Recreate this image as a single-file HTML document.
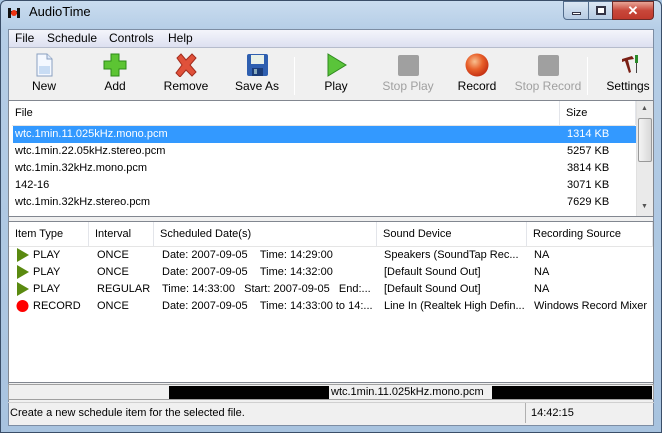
<!DOCTYPE html>
<html><head><meta charset="utf-8"><style>
*{margin:0;padding:0;box-sizing:border-box}
body{width:662px;height:433px;overflow:hidden;font-family:"Liberation Sans",sans-serif;font-size:11px;color:#000;position:relative;background:#a9c6e2}
.a{position:absolute;white-space:nowrap}
#frame{position:absolute;left:0;top:0;width:662px;height:433px;background:linear-gradient(180deg,#c9dcef 0,#b5cde6 30px,#a8c3df 100%);border:1px solid #3a4e68;border-radius:6px 6px 0 0}
#client{position:absolute;left:8px;top:29px;width:646px;height:397px;background:#f0f0f0;border:1px solid #7d8da3}
.menu{position:absolute;left:0;top:0;width:644px;height:18px;background:linear-gradient(#f4f5fb,#dde0f0);border-bottom:1px solid #b6bccc}
.tb{position:absolute;top:19px;left:0;width:644px;height:51px;background:#f0f0f0}
.btn{position:absolute;top:0;width:70px;text-align:center;font-size:12px}
.btn .ic{position:absolute;left:23px;top:4px;width:24px;height:24px}
.btn .lb{position:absolute;top:30px;left:0;width:70px;text-align:center}
.sep{position:absolute;top:8px;width:1px;height:38px;background:#a0a0a0;border-right:1px solid #fff}
.list{position:absolute;background:#fff;border:1px solid #828790}
.hd{position:absolute;top:0;height:24px;line-height:24px;padding-left:6px;border-right:1px solid #e3e5ea}
.row{position:absolute;left:3px;height:17px;line-height:17px}
</style></head><body>
<div id="frame"></div>
<div class="a" style="left:8px;top:7px;width:13px;height:11px;">
<svg width="14" height="12"><rect x="0" y="1" width="3" height="10" fill="#111"/><rect x="9" y="1" width="3" height="10" fill="#111"/><rect x="2" y="4" width="8" height="3" fill="#111"/><circle cx="6" cy="6" r="3" fill="#e31"/></svg></div>
<div class="a" style="left:29px;top:4px;font-size:13px;">AudioTime</div>
<div class="a" style="left:563px;top:1px;width:26px;height:19px;border:1px solid #526c8c;border-radius:0 0 0 4px;background:linear-gradient(#dbe7f4,#b6cbe3)"><div class="a" style="left:8px;top:10px;width:9px;height:3px;background:#fff;border:1px solid #334"></div></div>
<div class="a" style="left:588px;top:1px;width:25px;height:19px;border:1px solid #526c8c;background:linear-gradient(#dbe7f4,#b6cbe3)"><div class="a" style="left:7px;top:4px;width:10px;height:9px;border:2px solid #334;background:#fff"></div></div>
<div class="a" style="left:612px;top:1px;width:42px;height:19px;border:1px solid #6b2a28;border-radius:0 0 4px 0;background:linear-gradient(#e8a496,#c8473a 50%,#c0392d);color:#fff;font-weight:bold;font-size:13px;text-align:center;line-height:17px">✕</div>
<div id="client">
<div class="menu">
<span class="a" style="left:6px;top:1px;font-size:12px">File</span>
<span class="a" style="left:38px;top:1px;font-size:12px">Schedule</span>
<span class="a" style="left:100px;top:1px;font-size:12px">Controls</span>
<span class="a" style="left:159px;top:1px;font-size:12px">Help</span>
</div>
<div class="tb">
<div class="btn" style="left:0"><svg class="ic" viewBox="0 0 24 24"><path d="M5 1h10l5 5v17H5z" fill="#f4f8ff" stroke="#8aa0c0"/><path d="M15 1v5h5" fill="#dde8f8" stroke="#8aa0c0"/><rect x="7" y="13" width="11" height="8" fill="#c8dcf4"/></svg><div class="lb">New</div></div>
<div class="btn" style="left:71px"><svg class="ic" viewBox="0 0 24 24"><path d="M8 1h8v7h7v8h-7v7H8v-7H1V8h7z" fill="#5cc433" stroke="#2d8a17"/></svg><div class="lb">Add</div></div>
<div class="btn" style="left:142px"><svg class="ic" viewBox="0 0 24 24"><path d="M3 5l4-4 5 6 6-6 4 4-6 7 6 7-4 4-6-6-6 7-4-4 6-8z" fill="#e0513a" stroke="#a32c1d"/></svg><div class="lb">Remove</div></div>
<div class="btn" style="left:213px"><svg class="ic" viewBox="0 0 24 24"><rect x="2" y="1" width="21" height="22" rx="2" fill="#2e5fb0"/><rect x="6" y="2" width="13" height="9" fill="#e8f0e8"/><rect x="7" y="15" width="11" height="8" fill="#1a3c78"/><rect x="9" y="16" width="3" height="5" fill="#8ab"/></svg><div class="lb">Save As</div></div>
<div class="sep" style="left:285px"></div>
<div class="btn" style="left:292px"><svg class="ic" viewBox="0 0 24 24"><path d="M4 1l18 11L4 23z" fill="#5ac43a" stroke="#2f8a1f"/></svg><div class="lb">Play</div></div>
<div class="btn" style="left:364px;color:#a0a0a0"><svg class="ic" viewBox="0 0 24 24"><rect x="2" y="2" width="21" height="21" rx="2" fill="#a0a0a0"/></svg><div class="lb">Stop Play</div></div>
<div class="btn" style="left:433px"><svg class="ic" viewBox="0 0 24 24"><defs><radialGradient id="r" cx=".4" cy=".35" r=".7"><stop offset="0" stop-color="#f8c090"/><stop offset=".5" stop-color="#e8602a"/><stop offset="1" stop-color="#c02a10"/></radialGradient></defs><circle cx="12" cy="12" r="11.5" fill="url(#r)"/></svg><div class="lb">Record</div></div>
<div class="btn" style="left:504px;color:#a0a0a0"><svg class="ic" viewBox="0 0 24 24"><rect x="2" y="2" width="21" height="21" rx="2" fill="#a0a0a0"/></svg><div class="lb">Stop Record</div></div>
<div class="sep" style="left:578px"></div>
<div class="btn" style="left:584px"><svg class="ic" viewBox="0 0 24 24"><path d="M6 6l10-3 2 3-6 1 3 12-2 1-4-12-3 1z" fill="#7a1f14"/><rect x="19" y="2" width="3" height="8" fill="#2a8a2a"/><rect x="20" y="10" width="1" height="10" fill="#444"/></svg><div class="lb">Settings</div></div>
</div>
<div class="list" style="left:-1px;top:70px;width:646px;height:117px">
<div class="hd" style="left:0;width:551px">File</div>
<div class="hd" style="left:551px;width:76px">Size</div>
<div class="a" style="left:3px;top:24px;width:623px;height:1px;background:#e5e5e5"></div>
<div class="a" style="left:4px;top:25px;width:623px;height:17px;background:#3399ff"></div>
<div class="row" style="left:6px;top:25px;color:#fff">wtc.1min.11.025kHz.mono.pcm</div><div class="row" style="left:558px;top:25px;color:#fff">1314 KB</div>
<div class="row" style="left:6px;top:42px">wtc.1min.22.05kHz.stereo.pcm</div><div class="row" style="left:558px;top:42px">5257 KB</div>
<div class="row" style="left:6px;top:59px">wtc.1min.32kHz.mono.pcm</div><div class="row" style="left:558px;top:59px">3814 KB</div>
<div class="row" style="left:6px;top:76px">142-16</div><div class="row" style="left:558px;top:76px">3071 KB</div>
<div class="row" style="left:6px;top:93px">wtc.1min.32kHz.stereo.pcm</div><div class="row" style="left:558px;top:93px">7629 KB</div>
<div class="a" style="left:627px;top:0;width:17px;height:115px;background:#eaeaea;border-left:1px solid #e0e0e0">
<div class="a" style="left:4px;top:4px;font-size:7px;color:#555">▲</div>
<div class="a" style="left:1px;top:17px;width:14px;height:44px;border:1px solid #999;border-radius:2px;background:linear-gradient(90deg,#f4f4f4,#d8d8d8)"></div>
<div class="a" style="left:4px;top:102px;font-size:7px;color:#555">▼</div>
</div>
</div>
<div class="list" style="left:-1px;top:191px;width:646px;height:162px">
<div class="hd" style="left:0;width:80px">Item Type</div>
<div class="hd" style="left:80px;width:65px">Interval</div>
<div class="hd" style="left:145px;width:223px">Scheduled Date(s)</div>
<div class="hd" style="left:368px;width:150px">Sound Device</div>
<div class="hd" style="left:518px;width:126px">Recording Source</div>
<div class="a" style="left:0;top:24px;width:644px;height:1px;background:#e5e5e5"></div>
<svg class="a" style="left:7px;top:26px" width="14" height="68"><path d="M1 0l12 7-12 7z" fill="#5a8a10"/><path d="M1 17l12 7-12 7z" fill="#5a8a10"/><path d="M1 34l12 7-12 7z" fill="#5a8a10"/><circle cx="6.5" cy="58" r="6" fill="#f00"/></svg>
<div class="row" style="left:24px;top:25px">PLAY</div><div class="row" style="left:88px;top:25px">ONCE</div><div class="row" style="left:153px;top:25px">Date: 2007-09-05&nbsp;&nbsp;&nbsp;&nbsp;Time: 14:29:00</div><div class="row" style="left:375px;top:25px">Speakers (SoundTap Rec...</div><div class="row" style="left:525px;top:25px">NA</div>
<div class="row" style="left:24px;top:42px">PLAY</div><div class="row" style="left:88px;top:42px">ONCE</div><div class="row" style="left:153px;top:42px">Date: 2007-09-05&nbsp;&nbsp;&nbsp;&nbsp;Time: 14:32:00</div><div class="row" style="left:375px;top:42px">[Default Sound Out]</div><div class="row" style="left:525px;top:42px">NA</div>
<div class="row" style="left:24px;top:59px">PLAY</div><div class="row" style="left:88px;top:59px">REGULAR</div><div class="row" style="left:153px;top:59px">Time: 14:33:00&nbsp;&nbsp;&nbsp;Start: 2007-09-05&nbsp;&nbsp;&nbsp;End:...</div><div class="row" style="left:375px;top:59px">[Default Sound Out]</div><div class="row" style="left:525px;top:59px">NA</div>
<div class="row" style="left:24px;top:76px">RECORD</div><div class="row" style="left:88px;top:76px">ONCE</div><div class="row" style="left:153px;top:76px">Date: 2007-09-05&nbsp;&nbsp;&nbsp;&nbsp;Time: 14:33:00 to 14:...</div><div class="row" style="left:375px;top:76px">Line In (Realtek High Defin...</div><div class="row" style="left:525px;top:76px">Windows Record Mixer</div>
</div>
<div class="a" style="left:-1px;top:354px;width:646px;height:16px;border:1px solid #a0a0a0;background:#f0f0f0">
<div class="a" style="left:160px;top:1px;width:160px;height:13px;background:#000"></div>
<div class="a" style="left:322px;top:0px;line-height:14px">wtc.1min.11.025kHz.mono.pcm</div>
<div class="a" style="left:483px;top:1px;width:160px;height:13px;background:#000"></div>
</div>
<div class="a" style="left:-1px;top:372px;width:646px;height:1px;background:#d0d0d0"></div>
<div class="a" style="left:1px;top:377px">Create a new schedule item for the selected file.</div>
<div class="a" style="left:516px;top:373px;width:1px;height:20px;background:#b0b0b0"></div>
<div class="a" style="left:522px;top:377px">14:42:15</div>
</div>
</body></html>
